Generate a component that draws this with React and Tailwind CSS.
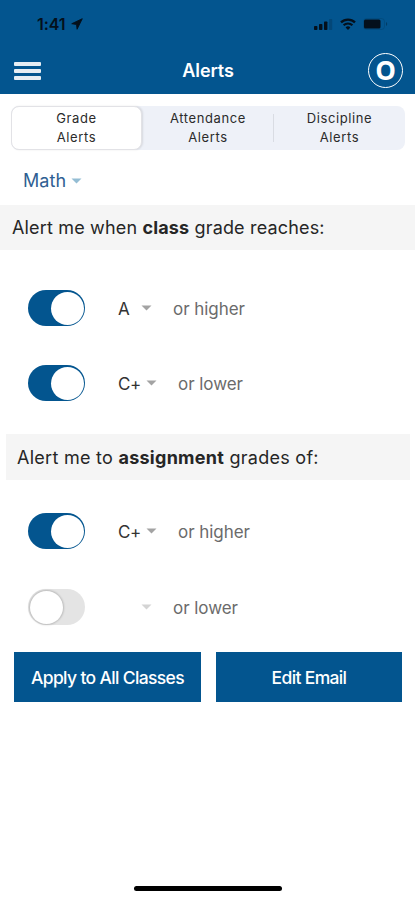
import React, { useState } from 'react';

const tabs = [
  { label: 'Grade', width: 'w-[131px]' },
  { label: 'Attendance', width: 'w-[132px]' },
  { label: 'Discipline', width: 'w-[131px]' },
];

const StatusBar = () => (
  <div className="flex h-[46px] items-start justify-between pl-[37px] pr-[25px] pt-[15px] text-[#04101c]">
    <div className="flex h-[18px] items-center gap-[6px]">
      <span className="text-[16px] font-semibold leading-[18px] tracking-[-0.1px]">1:41</span>
      <svg className="h-[12px] w-[12px]" viewBox="0 0 13 13" fill="currentColor" stroke="currentColor" strokeLinejoin="round" aria-hidden="true">
        <path d="M12.2.8.8 6.2l5.2.8.6 5.2z" />
      </svg>
    </div>
    <div className="flex h-[18px] items-center">
      <svg className="mr-[2px] h-[11px] w-[19px]" viewBox="0 0 19 11" fill="currentColor" aria-hidden="true">
        <rect x="0" y="7" width="3.4" height="4" rx="0.8" />
        <rect x="5" y="5" width="3.4" height="6" rx="0.8" />
        <rect x="10" y="2.5" width="3.4" height="8.5" rx="0.8" />
        <rect x="15" y="0" width="3.2" height="11" rx="0.8" opacity="0.2" />
      </svg>
      <svg className="ml-[5px] h-[12px] w-[16px]" viewBox="0 0 16 12" fill="none" stroke="currentColor" aria-hidden="true">
        <path d="M1 4.4a10 10 0 0 1 14 0" strokeWidth="2.3" />
        <path d="M3.6 7.3a6.2 6.2 0 0 1 8.8 0" strokeWidth="2.1" />
        <path d="M8 12 5.6 9.4a3.2 3.2 0 0 1 4.8 0z" fill="currentColor" stroke="none" />
      </svg>
      <svg className="ml-[7px] mr-[2px] h-[12px] w-[25px]" viewBox="0 0 25 12" aria-hidden="true">
        <rect x="0.5" y="0.5" width="21" height="11" rx="3" fill="none" stroke="currentColor" opacity="0.12" />
        <rect x="1" y="1.6" width="16.5" height="8.8" rx="1.5" fill="currentColor" />
        <path d="M23 4v4c1.6-.6 1.6-3.4 0-4z" fill="currentColor" opacity="0.35" />
      </svg>
    </div>
  </div>
);

const Header = () => (
  <header className="h-[94px] bg-[#03558f]">
    <StatusBar />
    <div className="flex h-[48px] items-center justify-between pl-[14px] pr-[12px]">
      <button type="button" aria-label="Menu" className="flex w-[34px] flex-col gap-[3px] pt-[2px]">
        <span className="h-[4px] w-[27px] rounded-[1px] bg-white/90" />
        <span className="h-[4px] w-[27px] rounded-[1px] bg-white/90" />
        <span className="h-[4px] w-[27px] rounded-[1px] bg-white/90" />
      </button>
      <h1 className="pt-px text-[18px] font-semibold leading-6 tracking-[-0.1px] text-white">Alerts</h1>
      <div className="flex h-[35px] w-[35px] items-center justify-center rounded-full border-[1.5px] border-white font-['Open_Sans',sans-serif] text-[26px] font-bold leading-none text-white">
        O
      </div>
    </div>
  </header>
);

const Caret = ({ className }) => (
  <svg className={className} width="11" height="6" viewBox="0 0 11 6" fill="currentColor" aria-hidden="true">
    <path d="M.5.5h10l-5 5z" />
  </svg>
);

const Toggle = ({ defaultOn }) => {
  const [on, setOn] = useState(defaultOn);

  return (
    <button
      type="button"
      role="switch"
      aria-checked={on}
      onClick={() => setOn(!on)}
      className={`flex h-9 w-[57px] items-center rounded-full p-[1.5px] ${on ? 'justify-end bg-[#03558f]' : 'justify-start bg-[#e4e4e4]'}`}
    >
      <span className={`h-[33px] w-[33px] rounded-full bg-white ${on ? '' : 'shadow-[0_0_2px_1px_rgba(0,0,0,0.18)]'}`} />
    </button>
  );
};

const AlertRow = ({ grade, suffix, on, wide }) => (
  <div className="flex h-9 items-center pl-7">
    <Toggle defaultOn={on} />
    <div className={`ml-[33px] flex items-center justify-between ${wide ? 'w-[39px]' : 'w-[34px]'}`}>
      <span className="pt-px text-[17px] leading-6 tracking-[-0.3px] text-[#333]">{grade}</span>
      <Caret className={grade ? 'text-[#a3a3a3]' : 'text-[#d4d4d4]'} />
    </div>
    <span className="ml-[21px] pt-px text-[17px] leading-6 tracking-[-0.05px] text-[#6b6b6b]">{suffix}</span>
  </div>
);

const App = () => (
  <div className="flex h-[900px] w-[415px] flex-col overflow-hidden bg-white font-['Inter',sans-serif]">
    <Header />

    <div className="ml-[11px] mt-3 flex h-[44px] w-[394px] items-center rounded-lg bg-[#eef1f8]">
      {tabs.map(({ label, width }, i) => (
        <button
          key={label}
          type="button"
          className={`${width} text-center text-[13px] leading-[19px] tracking-[0.6px] text-[#2b2b2b] ${
            i === 0 ? 'h-[44px] rounded-lg border border-[#e2e2e6] bg-white shadow-[1px_0_2px_rgba(0,0,0,0.1)]' : ''
          } ${i === 1 ? 'bg-[linear-gradient(#d9dce3,#d9dce3)] bg-[length:1px_28px] bg-right bg-no-repeat' : ''}`}
        >
          {label}
          <br />
          Alerts
        </button>
      ))}
    </div>

    <div className="flex h-[55px] items-center gap-[5px] pl-[23px] pt-[6px]">
      <span className="text-[18px] leading-6 tracking-[0.1px] text-[#2f5f93]">Math</span>
      <Caret className="text-[#94bdd4]" />
    </div>

    <h2 className="h-[45px] bg-[#f5f5f5] pl-3 text-[18px] font-normal leading-[46px] tracking-[0.16px] text-[#262626]">
      Alert me when <b className="font-bold">class</b> grade reaches:
    </h2>
    <div className="mt-10 flex flex-col gap-[39px]">
      <AlertRow grade="A" suffix="or higher" on />
      <AlertRow grade="C+" suffix="or lower" on wide />
    </div>

    <h2 className="ml-[6px] mt-[33px] h-[46px] w-[404px] bg-[#f5f5f5] pl-[11px] text-[18px] font-normal leading-[47px] tracking-[0.27px] text-[#262626]">
      Alert me to <b className="font-bold">assignment</b> grades of:
    </h2>
    <div className="mt-[33px] flex flex-col gap-10">
      <AlertRow grade="C+" suffix="or higher" on wide />
      <AlertRow grade="" suffix="or lower" on={false} />
    </div>

    <div className="ml-[14px] mt-[27px] flex gap-[15px]">
      <button type="button" className="h-[50px] w-[187px] bg-[#03558f] pt-[3px] text-[17.5px] font-medium tracking-[-0.65px] text-white">
        Apply to All Classes
      </button>
      <button type="button" className="h-[50px] w-[186px] bg-[#03558f] pt-[3px] text-[17.5px] font-medium tracking-[-0.65px] text-white">
        Edit Email
      </button>
    </div>

    <div className="mb-[9px] ml-[134px] mt-auto h-[5px] w-[148px] rounded-full bg-black" />
  </div>
);

export default App;
